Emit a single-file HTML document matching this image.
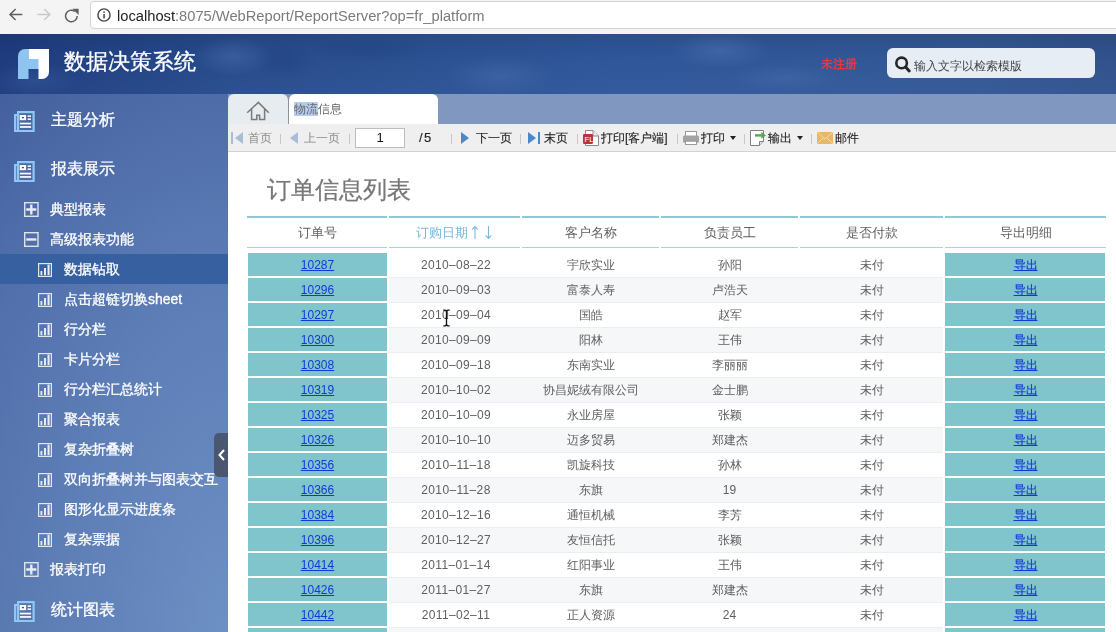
<!DOCTYPE html>
<html><head><meta charset="utf-8">
<style>
*{margin:0;padding:0;box-sizing:border-box}
html,body{width:1116px;height:632px;overflow:hidden;font-family:"Liberation Sans",sans-serif;background:#fff;position:relative}
.si,.mi,.td,.th,.tb,#title,#stxt,#unreg,#tabtxt,#urltxt,#rtitle,#ptxt{will-change:transform}
div,span,svg{position:absolute}
#chrome{left:0;top:0;width:1116px;height:34px;background:#f4f4f4}
#url{left:90px;top:1px;width:1040px;height:28px;border:1px solid #d4d4d4;border-radius:4px;background:#fff}
#urltxt{left:117px;top:7px;font-size:14.7px;color:#7b7b7b;white-space:nowrap;line-height:18px}
#urltxt b{font-weight:normal;color:#222;position:static}
#hdr{left:0;top:34px;width:1116px;height:60px;background:radial-gradient(ellipse 40px 20px at 233px 22px,rgba(125,165,225,0.2),rgba(125,165,225,0)),radial-gradient(ellipse 32px 18px at 285px 28px,rgba(15,35,95,0.15),rgba(15,35,95,0)),radial-gradient(ellipse 60px 14px at 370px 16px,rgba(15,35,95,0.12),rgba(15,35,95,0)),radial-gradient(ellipse 55px 20px at 500px 42px,rgba(125,165,225,0.15),rgba(125,165,225,0)),radial-gradient(ellipse 50px 18px at 720px 16px,rgba(125,165,225,0.2),rgba(125,165,225,0)),radial-gradient(ellipse 55px 14px at 785px 44px,rgba(125,165,225,0.12),rgba(125,165,225,0)),radial-gradient(ellipse 45px 16px at 35px 46px,rgba(125,165,225,0.12),rgba(125,165,225,0)),linear-gradient(180deg,rgba(10,20,60,0.15) 0%,rgba(10,20,60,0.03) 40%,rgba(255,255,255,0.02) 100%),linear-gradient(90deg,#1f3d80 0%,#284c8e 20%,#2c5293 35%,#30589c 55%,#33599a 75%,#345996 88%,#32538f 100%)}
#logo{left:18px;top:49px;width:31px;height:30px}
#title{left:64px;top:49px;font-size:22px;color:#fff;line-height:26px;white-space:nowrap;-webkit-text-stroke:0.3px #fff}
#unreg{left:821px;top:56px;font-size:12px;color:#e8383d;font-weight:bold;line-height:16px}
#search{left:887px;top:48px;width:208px;height:30px;background:#e6edf5;border-radius:6px}
#stxt{left:914px;top:58px;font-size:12px;color:#444;line-height:16px;white-space:nowrap}
#side{left:0;top:94px;width:228px;height:538px;background:radial-gradient(ellipse 320px 820px at 228px 538px,rgba(135,175,222,0.5),rgba(135,175,222,0) 100%),linear-gradient(180deg,#425e9c 0%,#4866a4 25%,#4d6aa7 45%,#5270aa 100%)}
.mi{color:#fff;font-size:16px;line-height:20px;white-space:nowrap;-webkit-text-stroke:0.3px #fff}
.si{color:#fff;font-size:14px;line-height:18px;white-space:nowrap;-webkit-text-stroke:0.3px #fff}
#hl{left:0;top:254px;width:228px;height:30px;background:#3660a0}
#collapse{left:214px;top:433px;width:14px;height:44px;background:#4b5670;border-radius:5px 0 0 5px}
#tabbar{left:228px;top:94px;width:888px;height:30px;background:#8097bf}
#hometab{left:228px;top:94px;width:60px;height:30px;background:#e7ecf0;border-radius:6px 6px 0 0}
#curtab{left:289px;top:94px;width:149px;height:30px;background:#fff;border-radius:6px 6px 0 0}
#tabtxt{left:294px;top:101px;font-size:12px;color:#666;line-height:16px;white-space:nowrap}
#tabtxt span{position:static;background:#b5cdf0}
#toolbar{left:228px;top:124px;width:888px;height:28px;background:#efefef;border-bottom:1px solid #d2d2d2}
.tb{top:130px;font-size:12px;line-height:16px;color:#262626;white-space:nowrap;-webkit-text-stroke:0.15px #262626}
.tb.dis{color:#8a8a8a;-webkit-text-stroke:0}
.sep{top:134px;width:1px;height:10px;background:#c8c8c8}
#pinput{left:355px;top:128px;width:50px;height:20px;background:#fff;border:1px solid #bdbdbd}
#ptxt{left:355px;top:129px;width:50px;text-align:center;font-size:13px;line-height:18px;color:#111}
#content{left:228px;top:152px;width:888px;height:480px;background:#fff}
#rtitle{left:267px;top:176px;font-size:24px;line-height:28px;color:#777;white-space:nowrap;-webkit-text-stroke:0.25px #777}
.hb2{top:216px;height:2px;background:#8ccad6}
.hb1{top:247px;height:1px;background:#a9d3de}
.th{top:224px;height:18px;text-align:center;font-size:13px;line-height:18px;color:#606060}
.th.hl{color:#78b7dc}
.stripe{left:389px;width:554px;height:26px;background:#f6f7f9;border-top:1px solid #eceef1;border-bottom:1px solid #eceef1}
.teal{height:23px;background:#80c5cb}
.td{height:25px;text-align:center;font-size:12px;line-height:25px;padding-top:1px;color:#606060}
.td.lk{font-size:12px;color:#1438d8;-webkit-text-stroke:0.2px #1438d8}
.td u{position:static}
.td.num{font-size:12px;padding-top:1px;-webkit-text-stroke:0}
.td.dt{letter-spacing:0.35px;padding-left:3px}

</style></head><body>
<div id="chrome"></div>
<svg style="left:8px;top:7px" width="16" height="15" viewBox="0 0 16 15"><path d="M14.3 7.5H2.2M7.6 2L2 7.5L7.6 13" fill="none" stroke="#5f5f5f" stroke-width="1.5"/></svg>
<svg style="left:36px;top:7px" width="16" height="15" viewBox="0 0 16 15"><path d="M1.5 7.5H13.6M8.2 2L13.8 7.5L8.2 13" fill="none" stroke="#c9c9c9" stroke-width="1.5"/></svg>
<svg style="left:64px;top:8px" width="16" height="15" viewBox="0 0 16 15"><path d="M13.2 8A5.8 5.8 0 1 1 10.8 3.3" fill="none" stroke="#5f5f5f" stroke-width="1.5"/><path d="M8.5 0.8L14.6 0.8L14.6 6.9z" fill="#5f5f5f"/></svg>
<div id="url"></div>
<svg style="left:97px;top:8px" width="14" height="14" viewBox="0 0 14 14"><circle cx="7" cy="7" r="6.1" fill="none" stroke="#444" stroke-width="1.4"/><rect x="6.3" y="6" width="1.5" height="4.4" fill="#444"/><rect x="6.3" y="3.4" width="1.5" height="1.5" fill="#444"/></svg>
<div id="urltxt"><b>localhost</b>:8075/WebReport/ReportServer?op=fr_platform</div>

<div id="hdr"></div>
<svg id="logo" viewBox="0 0 31 30"><path d="M7 0H10.5V10H21V20H10.5V30H0V7A7 7 0 0 1 7 0z" fill="#8ec4f0"/><path d="M10.5 0H31V23A7 7 0 0 1 24 30H20.5V10H10.5z" fill="#fff"/></svg>
<div id="title">数据决策系统</div>
<div id="unreg">未注册</div>
<div id="search"></div>
<svg style="left:895px;top:56px" width="17" height="17" viewBox="0 0 17 17"><circle cx="6.6" cy="6.9" r="5.3" fill="none" stroke="#262626" stroke-width="2.6"/><path d="M10.6 11l3.6 3.9" stroke="#262626" stroke-width="3" stroke-linecap="round"/></svg>
<div id="stxt">输入文字以检索模版</div>

<div id="side"></div>
<div id="hl"></div>
<!-- main icons -->
<svg style="left:14px;top:111px" width="21" height="21" viewBox="0 0 21 21"><path d="M3 0H20.7V21H0V3H3Z" fill="#8fc8f4"/><rect x="2" y="5" width="1" height="14" fill="#4a66a5" opacity="0.7"/><rect x="5.2" y="2.2" width="13.3" height="16.8" fill="#4a66a5"/><rect x="5.7" y="4" width="6.4" height="5.2" fill="#fff"/><rect x="7.9" y="5.9" width="2" height="1.4" fill="#3a4f80"/><rect x="13.6" y="4.4" width="3.4" height="1.5" fill="#fff"/><rect x="13.6" y="7.4" width="3.4" height="1.5" fill="#fff"/><rect x="5.9" y="11.7" width="11.2" height="1.7" fill="#fff"/><rect x="5.9" y="15.1" width="11.2" height="1.7" fill="#fff"/></svg>
<div class="mi" style="left:51px;top:110px">主题分析</div>
<svg style="left:14px;top:161px" width="21" height="21" viewBox="0 0 21 21"><path d="M3 0H20.7V21H0V3H3Z" fill="#8fc8f4"/><rect x="2" y="5" width="1" height="14" fill="#4d6ba8" opacity="0.7"/><rect x="5.2" y="2.2" width="13.3" height="16.8" fill="#4d6ba8"/><rect x="5.7" y="4" width="6.4" height="5.2" fill="#fff"/><rect x="7.9" y="5.9" width="2" height="1.4" fill="#3a4f80"/><rect x="13.6" y="4.4" width="3.4" height="1.5" fill="#fff"/><rect x="13.6" y="7.4" width="3.4" height="1.5" fill="#fff"/><rect x="5.9" y="11.7" width="11.2" height="1.7" fill="#fff"/><rect x="5.9" y="15.1" width="11.2" height="1.7" fill="#fff"/></svg>
<div class="mi" style="left:51px;top:159px">报表展示</div>
<svg style="left:14px;top:601px" width="21" height="21" viewBox="0 0 21 21"><path d="M3 0H20.7V21H0V3H3Z" fill="#8fc8f4"/><rect x="2" y="5" width="1" height="14" fill="#5575ae" opacity="0.7"/><rect x="5.2" y="2.2" width="13.3" height="16.8" fill="#5575ae"/><rect x="5.7" y="4" width="6.4" height="5.2" fill="#fff"/><rect x="7.9" y="5.9" width="2" height="1.4" fill="#3a4f80"/><rect x="13.6" y="4.4" width="3.4" height="1.5" fill="#fff"/><rect x="13.6" y="7.4" width="3.4" height="1.5" fill="#fff"/><rect x="5.9" y="11.7" width="11.2" height="1.7" fill="#fff"/><rect x="5.9" y="15.1" width="11.2" height="1.7" fill="#fff"/></svg>
<div class="mi" style="left:51px;top:600px">统计图表</div>
<!-- folders -->
<svg style="left:24px;top:202px" width="15" height="15" viewBox="0 0 15 15"><rect x="0.7" y="0.7" width="13.3" height="13.6" fill="none" stroke="#dfe4ec" stroke-width="1.4"/><path d="M2.2 7.5h10.2M7.3 2.6v9.8" stroke="#e8ecf2" stroke-width="2.4"/></svg>
<div class="si" style="left:50px;top:200px">典型报表</div>
<svg style="left:24px;top:232px" width="15" height="15" viewBox="0 0 15 15"><rect x="0.7" y="0.7" width="13.3" height="13.6" fill="none" stroke="#dfe4ec" stroke-width="1.4"/><path d="M2.2 7.5h10.2" stroke="#e8ecf2" stroke-width="2.4"/></svg>
<div class="si" style="left:50px;top:230px">高级报表功能</div>
<svg style="left:24px;top:562px" width="15" height="15" viewBox="0 0 15 15"><rect x="0.7" y="0.7" width="13.3" height="13.6" fill="none" stroke="#dfe4ec" stroke-width="1.4"/><path d="M2.2 7.5h10.2M7.3 2.6v9.8" stroke="#e8ecf2" stroke-width="2.4"/></svg>
<div class="si" style="left:50px;top:560px">报表打印</div>
<svg style="left:38px;top:263px" width="14" height="14" viewBox="0 0 14 14"><rect x="0.6" y="0.6" width="12.8" height="12.8" fill="none" stroke="#e2e6ee" stroke-width="1.2"/><rect x="2.5" y="8" width="1.8" height="4.2" fill="#e8ecf2"/><rect x="6" y="5" width="2" height="7.2" fill="#e8ecf2"/><rect x="9.5" y="1.6" width="2.1" height="10.6" fill="#e8ecf2"/></svg>
<div class="si" style="left:64px;top:260px">数据钻取</div>
<svg style="left:38px;top:293px" width="14" height="14" viewBox="0 0 14 14"><rect x="0.6" y="0.6" width="12.8" height="12.8" fill="none" stroke="#e2e6ee" stroke-width="1.2"/><rect x="2.5" y="8" width="1.8" height="4.2" fill="#e8ecf2"/><rect x="6" y="5" width="2" height="7.2" fill="#e8ecf2"/><rect x="9.5" y="1.6" width="2.1" height="10.6" fill="#e8ecf2"/></svg>
<div class="si" style="left:64px;top:290px">点击超链切换sheet</div>
<svg style="left:38px;top:323px" width="14" height="14" viewBox="0 0 14 14"><rect x="0.6" y="0.6" width="12.8" height="12.8" fill="none" stroke="#e2e6ee" stroke-width="1.2"/><rect x="2.5" y="8" width="1.8" height="4.2" fill="#e8ecf2"/><rect x="6" y="5" width="2" height="7.2" fill="#e8ecf2"/><rect x="9.5" y="1.6" width="2.1" height="10.6" fill="#e8ecf2"/></svg>
<div class="si" style="left:64px;top:320px">行分栏</div>
<svg style="left:38px;top:353px" width="14" height="14" viewBox="0 0 14 14"><rect x="0.6" y="0.6" width="12.8" height="12.8" fill="none" stroke="#e2e6ee" stroke-width="1.2"/><rect x="2.5" y="8" width="1.8" height="4.2" fill="#e8ecf2"/><rect x="6" y="5" width="2" height="7.2" fill="#e8ecf2"/><rect x="9.5" y="1.6" width="2.1" height="10.6" fill="#e8ecf2"/></svg>
<div class="si" style="left:64px;top:350px">卡片分栏</div>
<svg style="left:38px;top:383px" width="14" height="14" viewBox="0 0 14 14"><rect x="0.6" y="0.6" width="12.8" height="12.8" fill="none" stroke="#e2e6ee" stroke-width="1.2"/><rect x="2.5" y="8" width="1.8" height="4.2" fill="#e8ecf2"/><rect x="6" y="5" width="2" height="7.2" fill="#e8ecf2"/><rect x="9.5" y="1.6" width="2.1" height="10.6" fill="#e8ecf2"/></svg>
<div class="si" style="left:64px;top:380px">行分栏汇总统计</div>
<svg style="left:38px;top:413px" width="14" height="14" viewBox="0 0 14 14"><rect x="0.6" y="0.6" width="12.8" height="12.8" fill="none" stroke="#e2e6ee" stroke-width="1.2"/><rect x="2.5" y="8" width="1.8" height="4.2" fill="#e8ecf2"/><rect x="6" y="5" width="2" height="7.2" fill="#e8ecf2"/><rect x="9.5" y="1.6" width="2.1" height="10.6" fill="#e8ecf2"/></svg>
<div class="si" style="left:64px;top:410px">聚合报表</div>
<svg style="left:38px;top:443px" width="14" height="14" viewBox="0 0 14 14"><rect x="0.6" y="0.6" width="12.8" height="12.8" fill="none" stroke="#e2e6ee" stroke-width="1.2"/><rect x="2.5" y="8" width="1.8" height="4.2" fill="#e8ecf2"/><rect x="6" y="5" width="2" height="7.2" fill="#e8ecf2"/><rect x="9.5" y="1.6" width="2.1" height="10.6" fill="#e8ecf2"/></svg>
<div class="si" style="left:64px;top:440px">复杂折叠树</div>
<svg style="left:38px;top:473px" width="14" height="14" viewBox="0 0 14 14"><rect x="0.6" y="0.6" width="12.8" height="12.8" fill="none" stroke="#e2e6ee" stroke-width="1.2"/><rect x="2.5" y="8" width="1.8" height="4.2" fill="#e8ecf2"/><rect x="6" y="5" width="2" height="7.2" fill="#e8ecf2"/><rect x="9.5" y="1.6" width="2.1" height="10.6" fill="#e8ecf2"/></svg>
<div class="si" style="left:64px;top:470px">双向折叠树并与图表交互</div>
<svg style="left:38px;top:503px" width="14" height="14" viewBox="0 0 14 14"><rect x="0.6" y="0.6" width="12.8" height="12.8" fill="none" stroke="#e2e6ee" stroke-width="1.2"/><rect x="2.5" y="8" width="1.8" height="4.2" fill="#e8ecf2"/><rect x="6" y="5" width="2" height="7.2" fill="#e8ecf2"/><rect x="9.5" y="1.6" width="2.1" height="10.6" fill="#e8ecf2"/></svg>
<div class="si" style="left:64px;top:500px">图形化显示进度条</div>
<svg style="left:38px;top:533px" width="14" height="14" viewBox="0 0 14 14"><rect x="0.6" y="0.6" width="12.8" height="12.8" fill="none" stroke="#e2e6ee" stroke-width="1.2"/><rect x="2.5" y="8" width="1.8" height="4.2" fill="#e8ecf2"/><rect x="6" y="5" width="2" height="7.2" fill="#e8ecf2"/><rect x="9.5" y="1.6" width="2.1" height="10.6" fill="#e8ecf2"/></svg>
<div class="si" style="left:64px;top:530px">复杂票据</div>
<div id="collapse"></div>
<svg style="left:217px;top:448px" width="9" height="14" viewBox="0 0 9 14"><path d="M7 2L2.5 7L7 12" fill="none" stroke="#fff" stroke-width="2"/></svg>

<div id="tabbar"></div>
<div id="hometab"></div>
<svg style="left:246px;top:101px" width="24" height="20" viewBox="0 0 24 20"><path d="M1.2 11.8L12.3 1.4L22.8 11.8M5.6 8V18.4H10.8V14.3H13.6V18.4H18.6V8" fill="none" stroke="#7a7a7a" stroke-width="1.5"/></svg>
<div id="curtab"></div>
<div style="left:288px;top:96px;width:1px;height:28px;background:#8e949c"></div>
<div id="tabtxt"><span>物流</span>信息</div>

<div id="toolbar"></div>
<svg style="left:231px;top:132px" width="13" height="12" viewBox="0 0 13 12"><rect x="0" y="0" width="2" height="12" fill="#a9bdd6"/><path d="M12 0V12L4 6z" fill="#a9bdd6"/></svg>
<div class="tb dis" style="left:248px">首页</div>
<div class="sep" style="left:280px"></div>
<svg style="left:290px;top:132px" width="8" height="12" viewBox="0 0 8 12"><path d="M8 0V12L0 6z" fill="#a9bdd6"/></svg>
<div class="tb dis" style="left:304px">上一页</div>
<div class="sep" style="left:349px"></div>
<div id="pinput"></div>
<div id="ptxt">1</div>
<div class="tb" style="left:419px;font-size:13px;color:#222;letter-spacing:1.5px">/5</div>
<div class="sep" style="left:451px"></div>
<svg style="left:461px;top:132px" width="8" height="12" viewBox="0 0 8 12"><path d="M0 0V12L8 6z" fill="#4c88c6"/></svg>
<div class="tb" style="left:476px">下一页</div>
<div class="sep" style="left:520px"></div>
<svg style="left:528px;top:132px" width="13" height="12" viewBox="0 0 13 12"><path d="M0 0V12L8 6z" fill="#4c88c6"/><rect x="10" y="0" width="2" height="12" fill="#4c88c6"/></svg>
<div class="tb" style="left:544px">末页</div>
<div class="sep" style="left:577px"></div>
<svg style="left:583px;top:130px" width="17" height="17" viewBox="0 0 17 17"><path d="M2.5 0.5H10L15.5 6V15.5H2.5z" fill="#fff" stroke="#888" stroke-width="1"/><path d="M10 0.5V6H15.5" fill="#eee" stroke="#888"/><rect x="0" y="4" width="10" height="10" fill="#b8323f" rx="1.2"/><text x="1.6" y="12" font-size="8" font-family="Liberation Sans" fill="#fff" transform="scale(0.95 1)">FL</text></svg>
<div class="tb" style="left:601px">打印[客户端]</div>
<div class="sep" style="left:677px"></div>
<svg style="left:683px;top:131px" width="16" height="14" viewBox="0 0 16 14"><rect x="2.5" y="0.5" width="11" height="6" fill="#fff" stroke="#9a9a9a"/><rect x="0" y="4.5" width="16" height="7.3" rx="1.5" fill="#a3a3a3"/><rect x="2.5" y="10.2" width="11" height="3.3" fill="#fff" stroke="#9a9a9a"/></svg>
<div class="tb" style="left:701px">打印</div>
<svg style="left:730px;top:136px" width="6" height="4" viewBox="0 0 6 4"><path d="M0 0h6L3 4z" fill="#222"/></svg>
<div class="sep" style="left:744px"></div>
<svg style="left:750px;top:130px" width="17" height="17" viewBox="0 0 17 17"><path d="M0.5 0.5H13.5V11.5L9.5 15.5H0.5Z" fill="#fff" stroke="#808080" stroke-width="1"/><path d="M13.5 11.5H9.5V15.5" fill="#e4e4e4" stroke="#808080" stroke-width="1"/><rect x="5" y="4.2" width="6.6" height="2.4" fill="#5ba456"/><path d="M11.2 1.9L16 5.4L11.2 8.8Z" fill="#5ba456"/></svg>
<div class="tb" style="left:768px">输出</div>
<svg style="left:797px;top:136px" width="6" height="4" viewBox="0 0 6 4"><path d="M0 0h6L3 4z" fill="#222"/></svg>
<div class="sep" style="left:811px"></div>
<svg style="left:817px;top:132px" width="16" height="12" viewBox="0 0 16 12"><rect x="0" y="0" width="16" height="12" rx="1" fill="#e9b76a"/><path d="M0.5 0.5L8 7L15.5 0.5M0.5 11.5L6 6M15.5 11.5L10 6" fill="none" stroke="#f5d9a8" stroke-width="1"/></svg>
<div class="tb" style="left:835px">邮件</div>

<div id="content"></div>
<div id="rtitle">订单信息列表</div>

<div id="tbl">
<div class="hb2" style="left:247px;width:140px"></div>
<div class="hb1" style="left:247px;width:140px"></div>
<div class="hb2" style="left:389px;width:131px"></div>
<div class="hb1" style="left:389px;width:131px"></div>
<div class="hb2" style="left:522px;width:137px"></div>
<div class="hb1" style="left:522px;width:137px"></div>
<div class="hb2" style="left:661px;width:137px"></div>
<div class="hb1" style="left:661px;width:137px"></div>
<div class="hb2" style="left:800px;width:143px"></div>
<div class="hb1" style="left:800px;width:143px"></div>
<div class="hb2" style="left:945px;width:161px"></div>
<div class="hb1" style="left:945px;width:161px"></div>
<div class="th" style="left:248px;width:139px">订单号</div>
<div class="th hl" style="left:389px;width:131px">订购日期<svg style="position:static;vertical-align:-3px;margin-left:3px" width="22" height="15" viewBox="0 0 22 15"><path d="M4 14V2M1.2 4.6L4 1.6L6.8 4.6M17.5 1V13M14.7 10.4L17.5 13.4L20.3 10.4" fill="none" stroke="#7ab8dc" stroke-width="1.1"/></svg></div>
<div class="th" style="left:522px;width:137px">客户名称</div>
<div class="th" style="left:661px;width:137px">负责员工</div>
<div class="th" style="left:800px;width:143px">是否付款</div>
<div class="th" style="left:945px;width:161px">导出明细</div>
<div class="teal" style="left:248px;width:139px;top:253px"></div>
<div class="teal" style="left:945px;width:160px;top:253px"></div>
<div class="td lk num" style="left:248px;width:139px;top:252px"><u>10287</u></div>
<div class="td num dt" style="left:389px;width:131px;top:252px">2010–08–22</div>
<div class="td" style="left:522px;width:137px;top:252px">宇欣实业</div>
<div class="td" style="left:661px;width:137px;top:252px">孙阳</div>
<div class="td" style="left:800px;width:143px;top:252px">未付</div>
<div class="td lk" style="left:945px;width:161px;top:252px"><u>导出</u></div>
<div class="stripe" style="top:277px"></div>
<div class="teal" style="left:248px;width:139px;top:278px"></div>
<div class="teal" style="left:945px;width:160px;top:278px"></div>
<div class="td lk num" style="left:248px;width:139px;top:277px"><u>10296</u></div>
<div class="td num dt" style="left:389px;width:131px;top:277px">2010–09–03</div>
<div class="td" style="left:522px;width:137px;top:277px">富泰人寿</div>
<div class="td" style="left:661px;width:137px;top:277px">卢浩天</div>
<div class="td" style="left:800px;width:143px;top:277px">未付</div>
<div class="td lk" style="left:945px;width:161px;top:277px"><u>导出</u></div>
<div class="teal" style="left:248px;width:139px;top:303px"></div>
<div class="teal" style="left:945px;width:160px;top:303px"></div>
<div class="td lk num" style="left:248px;width:139px;top:302px"><u>10297</u></div>
<div class="td num dt" style="left:389px;width:131px;top:302px">2010–09–04</div>
<div class="td" style="left:522px;width:137px;top:302px">国皓</div>
<div class="td" style="left:661px;width:137px;top:302px">赵军</div>
<div class="td" style="left:800px;width:143px;top:302px">未付</div>
<div class="td lk" style="left:945px;width:161px;top:302px"><u>导出</u></div>
<div class="stripe" style="top:327px"></div>
<div class="teal" style="left:248px;width:139px;top:328px"></div>
<div class="teal" style="left:945px;width:160px;top:328px"></div>
<div class="td lk num" style="left:248px;width:139px;top:327px"><u>10300</u></div>
<div class="td num dt" style="left:389px;width:131px;top:327px">2010–09–09</div>
<div class="td" style="left:522px;width:137px;top:327px">阳林</div>
<div class="td" style="left:661px;width:137px;top:327px">王伟</div>
<div class="td" style="left:800px;width:143px;top:327px">未付</div>
<div class="td lk" style="left:945px;width:161px;top:327px"><u>导出</u></div>
<div class="teal" style="left:248px;width:139px;top:353px"></div>
<div class="teal" style="left:945px;width:160px;top:353px"></div>
<div class="td lk num" style="left:248px;width:139px;top:352px"><u>10308</u></div>
<div class="td num dt" style="left:389px;width:131px;top:352px">2010–09–18</div>
<div class="td" style="left:522px;width:137px;top:352px">东南实业</div>
<div class="td" style="left:661px;width:137px;top:352px">李丽丽</div>
<div class="td" style="left:800px;width:143px;top:352px">未付</div>
<div class="td lk" style="left:945px;width:161px;top:352px"><u>导出</u></div>
<div class="stripe" style="top:377px"></div>
<div class="teal" style="left:248px;width:139px;top:378px"></div>
<div class="teal" style="left:945px;width:160px;top:378px"></div>
<div class="td lk num" style="left:248px;width:139px;top:377px"><u>10319</u></div>
<div class="td num dt" style="left:389px;width:131px;top:377px">2010–10–02</div>
<div class="td" style="left:522px;width:137px;top:377px">协昌妮绒有限公司</div>
<div class="td" style="left:661px;width:137px;top:377px">金士鹏</div>
<div class="td" style="left:800px;width:143px;top:377px">未付</div>
<div class="td lk" style="left:945px;width:161px;top:377px"><u>导出</u></div>
<div class="teal" style="left:248px;width:139px;top:403px"></div>
<div class="teal" style="left:945px;width:160px;top:403px"></div>
<div class="td lk num" style="left:248px;width:139px;top:402px"><u>10325</u></div>
<div class="td num dt" style="left:389px;width:131px;top:402px">2010–10–09</div>
<div class="td" style="left:522px;width:137px;top:402px">永业房屋</div>
<div class="td" style="left:661px;width:137px;top:402px">张颖</div>
<div class="td" style="left:800px;width:143px;top:402px">未付</div>
<div class="td lk" style="left:945px;width:161px;top:402px"><u>导出</u></div>
<div class="stripe" style="top:427px"></div>
<div class="teal" style="left:248px;width:139px;top:428px"></div>
<div class="teal" style="left:945px;width:160px;top:428px"></div>
<div class="td lk num" style="left:248px;width:139px;top:427px"><u>10326</u></div>
<div class="td num dt" style="left:389px;width:131px;top:427px">2010–10–10</div>
<div class="td" style="left:522px;width:137px;top:427px">迈多贸易</div>
<div class="td" style="left:661px;width:137px;top:427px">郑建杰</div>
<div class="td" style="left:800px;width:143px;top:427px">未付</div>
<div class="td lk" style="left:945px;width:161px;top:427px"><u>导出</u></div>
<div class="teal" style="left:248px;width:139px;top:453px"></div>
<div class="teal" style="left:945px;width:160px;top:453px"></div>
<div class="td lk num" style="left:248px;width:139px;top:452px"><u>10356</u></div>
<div class="td num dt" style="left:389px;width:131px;top:452px">2010–11–18</div>
<div class="td" style="left:522px;width:137px;top:452px">凯旋科技</div>
<div class="td" style="left:661px;width:137px;top:452px">孙林</div>
<div class="td" style="left:800px;width:143px;top:452px">未付</div>
<div class="td lk" style="left:945px;width:161px;top:452px"><u>导出</u></div>
<div class="stripe" style="top:477px"></div>
<div class="teal" style="left:248px;width:139px;top:478px"></div>
<div class="teal" style="left:945px;width:160px;top:478px"></div>
<div class="td lk num" style="left:248px;width:139px;top:477px"><u>10366</u></div>
<div class="td num dt" style="left:389px;width:131px;top:477px">2010–11–28</div>
<div class="td" style="left:522px;width:137px;top:477px">东旗</div>
<div class="td num" style="left:661px;width:137px;top:477px">19</div>
<div class="td" style="left:800px;width:143px;top:477px">未付</div>
<div class="td lk" style="left:945px;width:161px;top:477px"><u>导出</u></div>
<div class="teal" style="left:248px;width:139px;top:503px"></div>
<div class="teal" style="left:945px;width:160px;top:503px"></div>
<div class="td lk num" style="left:248px;width:139px;top:502px"><u>10384</u></div>
<div class="td num dt" style="left:389px;width:131px;top:502px">2010–12–16</div>
<div class="td" style="left:522px;width:137px;top:502px">通恒机械</div>
<div class="td" style="left:661px;width:137px;top:502px">李芳</div>
<div class="td" style="left:800px;width:143px;top:502px">未付</div>
<div class="td lk" style="left:945px;width:161px;top:502px"><u>导出</u></div>
<div class="stripe" style="top:527px"></div>
<div class="teal" style="left:248px;width:139px;top:528px"></div>
<div class="teal" style="left:945px;width:160px;top:528px"></div>
<div class="td lk num" style="left:248px;width:139px;top:527px"><u>10396</u></div>
<div class="td num dt" style="left:389px;width:131px;top:527px">2010–12–27</div>
<div class="td" style="left:522px;width:137px;top:527px">友恒信托</div>
<div class="td" style="left:661px;width:137px;top:527px">张颖</div>
<div class="td" style="left:800px;width:143px;top:527px">未付</div>
<div class="td lk" style="left:945px;width:161px;top:527px"><u>导出</u></div>
<div class="teal" style="left:248px;width:139px;top:553px"></div>
<div class="teal" style="left:945px;width:160px;top:553px"></div>
<div class="td lk num" style="left:248px;width:139px;top:552px"><u>10414</u></div>
<div class="td num dt" style="left:389px;width:131px;top:552px">2011–01–14</div>
<div class="td" style="left:522px;width:137px;top:552px">红阳事业</div>
<div class="td" style="left:661px;width:137px;top:552px">王伟</div>
<div class="td" style="left:800px;width:143px;top:552px">未付</div>
<div class="td lk" style="left:945px;width:161px;top:552px"><u>导出</u></div>
<div class="stripe" style="top:577px"></div>
<div class="teal" style="left:248px;width:139px;top:578px"></div>
<div class="teal" style="left:945px;width:160px;top:578px"></div>
<div class="td lk num" style="left:248px;width:139px;top:577px"><u>10426</u></div>
<div class="td num dt" style="left:389px;width:131px;top:577px">2011–01–27</div>
<div class="td" style="left:522px;width:137px;top:577px">东旗</div>
<div class="td" style="left:661px;width:137px;top:577px">郑建杰</div>
<div class="td" style="left:800px;width:143px;top:577px">未付</div>
<div class="td lk" style="left:945px;width:161px;top:577px"><u>导出</u></div>
<div class="teal" style="left:248px;width:139px;top:603px"></div>
<div class="teal" style="left:945px;width:160px;top:603px"></div>
<div class="td lk num" style="left:248px;width:139px;top:602px"><u>10442</u></div>
<div class="td num dt" style="left:389px;width:131px;top:602px">2011–02–11</div>
<div class="td" style="left:522px;width:137px;top:602px">正人资源</div>
<div class="td num" style="left:661px;width:137px;top:602px">24</div>
<div class="td" style="left:800px;width:143px;top:602px">未付</div>
<div class="td lk" style="left:945px;width:161px;top:602px"><u>导出</u></div>
<div class="stripe" style="top:627px"></div>
<div class="teal" style="left:248px;width:139px;top:628px"></div>
<div class="teal" style="left:945px;width:160px;top:628px"></div>
<div class="td lk num" style="left:248px;width:139px;top:627px"><u>10453</u></div>
<div class="td num dt" style="left:389px;width:131px;top:627px">2011–02–21</div>
<div class="td" style="left:522px;width:137px;top:627px">东旗</div>
<div class="td" style="left:661px;width:137px;top:627px">王伟</div>
<div class="td" style="left:800px;width:143px;top:627px">未付</div>
<div class="td lk" style="left:945px;width:161px;top:627px"><u>导出</u></div>
</div>
<svg style="position:absolute;left:443px;top:309px" width="8" height="18" viewBox="0 0 8 18"><path d="M0.3 1.2Q3.5 0.4 3.5 3.5V14.5Q3.5 17.6 0.3 16.8M6.7 1.2Q3.5 0.4 3.5 3.5M6.7 16.8Q3.5 17.6 3.5 14.5M2.2 9.3H4.8" fill="none" stroke="#111" stroke-width="1.3"/></svg>
</body></html>
